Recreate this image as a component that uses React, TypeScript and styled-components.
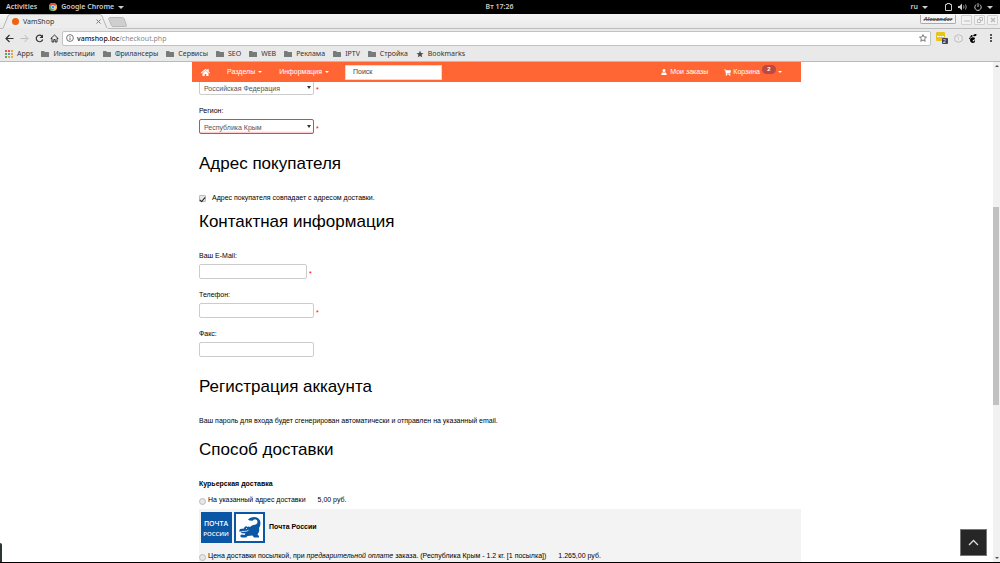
import React from "react";
import styled, { createGlobalStyle } from "styled-components";
import { FaHome, FaUser, FaShoppingCart } from "react-icons/fa";

const uiFont = '"Noto Sans", "Open Sans", sans-serif';
const pageFont = '"Liberation Sans", Arial, sans-serif';

const GlobalStyle = createGlobalStyle`
  * { box-sizing: border-box; }
  body { margin: 0; background: #fff; font-family: ${pageFont}; font-size: 7px; }
  button, input, select { font: inherit; margin: 0; }
  a { color: inherit; text-decoration: none; }
  svg { display: block; flex: none; }
`;

const Screen = styled.div`
  display: flex;
  flex-direction: column;
  height: 100vh;
  min-height: 300px;
  border-bottom: 1px solid #000;
`;

/* Desktop bar */
const DesktopBar = styled.header`
  display: grid;
  grid-template-columns: 1fr auto 1fr;
  align-items: center;
  flex: none;
  height: 14px;
  padding: 0 7px 0 6px;
  background: #000;
  color: #ccc;
  font: 600 7px/14px ${uiFont};
`;
const BarGroup = styled.div<{ $end?: boolean; $gap: number }>`
  display: flex;
  align-items: center;
  justify-content: ${(p) => (p.$end ? "flex-end" : "flex-start")};
  gap: ${(p) => p.$gap}px;
`;
const BarButton = styled.button<{ $gap?: number }>`
  display: flex;
  align-items: center;
  gap: ${(p) => p.$gap ?? 4}px;
  padding: 0;
  border: 0;
  background: none;
  color: inherit;
`;
const Caret = styled.span<{ $size?: number }>`
  border: ${(p) => p.$size ?? 2}px solid transparent;
  border-top-color: currentColor;
  border-bottom: 0;
`;

/* Browser window */
const TabStrip = styled.div`
  display: flex;
  align-items: flex-start;
  flex: none;
  height: 15px;
  padding: 0 2px 0 3px;
  border-bottom: 1px solid #bdbdbd;
  background: linear-gradient(#f6f6f6, #e9e9e9);
  font: 7px/14px ${uiFont};
  color: #333;
`;
const Tab = styled.div`
  display: grid;
  width: 105px;
  height: 15px;
  > * { grid-area: 1 / 1; }
`;
const TabContent = styled.div`
  display: flex;
  align-items: center;
  gap: 4px;
  padding: 0 7px 0 9px;
`;
const TabTitle = styled.span`
  flex: 1;
`;
const CloseButton = styled.button`
  padding: 0;
  border: 0;
  background: none;
`;
const NewTab = styled.button`
  padding: 3px 0 0;
  border: 0;
  background: none;
`;
const WindowControls = styled.div`
  display: flex;
  gap: 2px;
  margin-left: auto;
  padding-top: 1px;
`;
const UserButton = styled.button`
  width: 36px;
  height: 9px;
  margin-right: 3px;
  padding: 0;
  border: 1px solid #aaa;
  border-top: 0;
  border-radius: 0 0 2px 2px;
  background: #f4f4f4;
  color: #555;
  font: italic bold 6px/7px ${uiFont};
  text-decoration: line-through;
`;
const WindowButton = styled.button`
  display: grid;
  place-items: center;
  width: 11px;
  height: 10px;
  padding: 0;
  border: 1px solid #d0d0d0;
  border-radius: 1px;
  background: #f2f2f2;
`;
const Toolbar = styled.div`
  display: flex;
  align-items: center;
  flex: none;
  gap: 6px;
  height: 18px;
  padding: 0 5px;
  background: #e9e9e9;
`;
const IconButton = styled.button`
  padding: 0;
  border: 0;
  background: none;
`;
const Address = styled.div`
  display: flex;
  align-items: center;
  flex: 1;
  gap: 3px;
  height: 15px;
  margin: 0 -1px 0 -3px;
  padding: 0 3px;
  border: 1px solid #c2c2c2;
  border-radius: 2px;
  background: #fff;
  font: 7px/13px ${uiFont};
  color: #888;
`;
const Url = styled.span`
  flex: 1;
  b { font-weight: 500; color: #111; }
`;
const ToolbarIcons = styled.div`
  display: flex;
  align-items: center;
  gap: 6px;
  padding-right: 2px;
`;
const Bookmarks = styled.nav`
  display: flex;
  align-items: center;
  flex: none;
  gap: 8px;
  height: 15px;
  padding: 0 5px 1px;
  border-bottom: 1px solid #bdb9ba;
  background: #e9e9e9;
  font: 7px/14px ${uiFont};
  color: #333;
`;
const Bookmark = styled.a`
  display: flex;
  align-items: center;
  gap: 4px;
`;

/* Shop page */
const Viewport = styled.div`
  position: relative;
  display: flex;
  flex: 1;
  min-height: 0;
`;
const Page = styled.main`
  flex: 1;
  min-width: 0;
  overflow: hidden;
  color: #000;
  line-height: 15px;
`;
const Scrollbar = styled.div`
  display: flex;
  flex-direction: column;
  align-items: center;
  flex: none;
  width: 7px;
  padding: 3px 0;
  background: #f1f1f1;
`;
const Track = styled.div`
  flex: 1;
  width: 100%;
  display: grid;
  grid-template-rows: 140fr 198fr 152fr;
`;
const Thumb = styled.div`
  grid-row: 2;
  margin: 0 1px 0 0;
  background: #c1c1c1;
`;
const ScrollArrow = styled.span<{ $down?: boolean }>`
  border: 2px solid transparent;
  ${(p) => (p.$down ? "border-top-color: #505050; border-bottom: 0;" : "border-bottom-color: #505050; border-top: 0;")}
`;
const Container = styled.div`
  max-width: 609px;
  margin: 0 auto;
`;
const NavLayer = styled.div`
  position: absolute;
  top: 0;
  left: 0;
  right: 7px;
  z-index: 1;
`;
const Navbar = styled.nav`
  display: flex;
  align-items: center;
  height: 20px;
  padding: 0 19px 0 9px;
  background: #ff6633;
  color: #fff;
  line-height: 20px;
`;
const NavLink = styled.a<{ $space: number; $gap?: number }>`
  display: flex;
  align-items: center;
  gap: ${(p) => p.$gap ?? 3}px;
  margin-right: ${(p) => p.$space}px;
`;
const Search = styled.input`
  width: 97px;
  height: 15px;
  margin-right: auto;
  padding: 0 7px;
  border: 1px solid #ddd;
  background: #fff;
  color: #333;
  &::placeholder { color: #444; opacity: 1; }
`;
const Badge = styled.span`
  align-self: flex-start;
  width: 14px;
  height: 9px;
  margin-top: 3px;
  border-radius: 5px;
  background: #b94a48;
  font: bold 6px/9px ${pageFont};
  text-align: center;
`;
const Form = styled.form`
  padding: 18px 0 0 7px;
`;
const Field = styled.div`
  padding-bottom: 8px;
`;
const Label = styled.label`
  display: block;
  margin-bottom: 1px;
`;
const ControlRow = styled.div`
  display: flex;
  align-items: center;
  gap: 2px;
  height: 15px;
`;
const inputBox = `
  height: 15px;
  border: 1px solid #ccc;
  border-radius: 2px;
  background: #fff;
  color: #555;
`;
const TextInput = styled.input<{ $short?: boolean }>`
  ${inputBox}
  width: ${(p) => (p.$short ? 108 : 115)}px;
  padding: 0 5px;
`;
const SelectWrap = styled.span`
  display: grid;
  align-items: center;
  width: 115px;
  > * { grid-area: 1 / 1; }
`;
const Select = styled.select<{ $invalid?: boolean }>`
  ${inputBox}
  appearance: none;
  width: 100%;
  padding: 0 4px 1px;
  border-color: ${(p) => (p.$invalid ? "#e2404c" : "#ccc")};
  background: ${(p) => (p.$invalid ? "linear-gradient(#fff 11px, #fbc4c6)" : "#fff")};
`;
const SelectArrow = styled(Caret)`
  justify-self: end;
  margin-right: 3px;
  border-top-width: 3px;
  border-top-color: #333;
  pointer-events: none;
`;
const Required = styled.span`
  color: #f00;
  line-height: 15px;
  padding-top: 4px;
`;
const Heading = styled.h2`
  margin: 11px 0 16px;
  font-size: 17px;
  font-weight: 400;
  line-height: 21px;
`;
const Text = styled.p<{ $bold?: boolean }>`
  margin: 0;
  font-weight: ${(p) => (p.$bold ? 700 : 400)};
`;
const CheckRow = styled.label`
  display: flex;
  gap: 6px;
  height: 10px;
`;
const Checkbox = styled.input`
  appearance: none;
  display: grid;
  place-items: center;
  width: 7px;
  height: 7px;
  margin-top: 5px;
  border: 1px solid #bbb;
  border-radius: 1px;
  background: #e8e8e8;
  &:checked::after {
    content: "";
    width: 2px;
    height: 5px;
    border: solid #222;
    border-width: 0 1px 1px 0;
    transform: rotate(40deg);
  }
`;
const Option = styled.label`
  display: flex;
  align-items: center;
  gap: 2px;
  height: 17px;
`;
const Radio = styled.input`
  appearance: none;
  width: 7px;
  height: 7px;
  margin-top: 3px;
  border: 1px solid #bbb;
  border-radius: 50%;
  background: #e6e6e6;
`;
const Price = styled.span`
  margin-left: 10px;
`;
const Shaded = styled.section`
  margin-top: 1px;
  background: #f3f3f3;
  padding-top: 3px;
`;
const Carrier = styled.h3`
  display: flex;
  align-items: center;
  gap: 2px;
  margin: 0 0 4px;
  padding-left: 2px;
  font-size: 7px;
`;
const CarrierName = styled.span`
  margin: 0 0 2px 2px;
`;
const ToTop = styled.button`
  position: absolute;
  right: 13px;
  bottom: 6px;
  display: grid;
  place-items: center;
  width: 27px;
  height: 27px;
  padding: 0;
  border: 1px solid #777;
  background: #262626;
`;
const StatusEdge = styled.div`
  position: absolute;
  left: 0;
  bottom: 0;
  width: 2px;
  height: 19px;
  border-top-right-radius: 2px;
  background: #2e3436;
`;

const Folder = () => (
  <svg width="8" height="8" viewBox="0 0 8 8"><path d="M0 1.500Q0 1 .5 1H3l1 1h3.500q.5 0 .5.5v4q0 .5-.5.5h-7Q0 7 0 6.500z" fill="#777b7b" /></svg>
);
const StarIcon = ({ filled }: { filled?: boolean }) => (
  <svg width="8" height="8" viewBox="0 0 16 16">
    <path d="M8 1.200l2 4.700 5 .4-3.800 3.300 1.200 5L8 12l-4.400 2.600 1.200-5L1 6.300l5-.4z" fill={filled ? "#505050" : "none"} stroke="#505050" strokeWidth={filled ? 0 : 1.5} />
  </svg>
);
const AppsIcon = () => (
  <svg width="8" height="8" viewBox="0 0 8 8">
    {["#e8554a", "#e8554a", "#e8a33c", "#5aa865", "#5b8de0", "#e8a33c", "#5aa865", "#e8a33c", "#e8b33c"].map((c, i) => (
      <rect key={i} x={(i % 3) * 3} y={Math.floor(i / 3) * 3} width="2" height="2" fill={c} />
    ))}
  </svg>
);
const ChromeLogo = () => (
  <svg width="8" height="8" viewBox="0 0 16 16">
    <circle cx="8" cy="8" r="8" fill="#f7ca3e" />
    <path d="M8 8L1.100 4A8 8 0 0 1 15 4z" fill="#dd4b3e" />
    <path d="M8 8L1.100 4A8 8 0 0 0 7.500 16L11 10z" fill="#4ba55c" />
    <circle cx="8" cy="8" r="3.900" fill="#fff" />
    <circle cx="8" cy="8" r="3" fill="#4a8af4" />
  </svg>
);
const logoFont = { fontFamily: '"Open Sans", sans-serif', fontWeight: 600, fill: "#fff" };
const PostLogo = () => (
  <svg width="31" height="31" viewBox="0 0 31 31">
    <rect width="31" height="31" fill="#0b56a5" />
    <text x="15" y="14" textAnchor="middle" fontSize="7" {...logoFont}>ПОЧТА</text>
    <text x="15" y="24" textAnchor="middle" fontSize="6" {...logoFont}>РОССИИ</text>
  </svg>
);
const CrocLogo = () => (
  <svg width="31" height="31" viewBox="0 0 31 31">
    <rect x="1" y="1" width="29" height="29" fill="#fff" stroke="#0b56a5" strokeWidth="2" />
    <path d="M5 19.500l1-2.500 4-.5.5-1.500q1.500-1.500 3 0 1-1 2.500 0 1.500-2 4.500-2.200 3-.3 3-3 0-2.500-2.500-2.600-1.500 0-2.500 1.500l-3-.2-1.500-1q2-2.500 6.500-2.500 5.500.5 6 6 0 3-1.500 5 1 3.500-1.500 6.500l1.500 1.500v1.500h-5l-1.500-2-5 .5-1.500 1.500H7.500l-1.500-1.500 1.500-1.500 3 .5 1-1.500-5-.5 2-1.500z" fill="#0b56a5" />
    <path d="M8 19.500l4.500-.3 2-1M12 16.500h1" stroke="#fff" strokeWidth=".8" fill="none" />
  </svg>
);

const folders = ["Инвестиции", "Фрилансеры", "Сервисы", "SEO", "WEB", "Реклама", "IPTV", "Стройка"];

function DesktopHeader() {
  return (
    <DesktopBar>
      <BarGroup $gap={12}>
        <BarButton>Activities</BarButton>
        <BarButton><ChromeLogo />Google Chrome<Caret $size={3} /></BarButton>
      </BarGroup>
      <span>Вт 17:26</span>
      <BarGroup $end $gap={7}>
        <BarButton>ru<Caret $size={3} /></BarButton>
        <svg width="32" height="8" viewBox="-10 0 32 8">
          <path d="M.5 1.500h1.500v-1h3v1h1.500v6h-6z" stroke="#ccc" fill="none" />
          <path d="M13 3h1.500l2.500-2.500v7L14.500 5H13z" fill="#ccc" />
          <path d="M18.500 2.500q1 1.500 0 3M20.500 1.500q1.500 2.500 0 5" stroke="#999" fill="none" />
        </svg>
        <BarButton aria-label="Power" $gap={5}>
          <svg width="8" height="8" viewBox="0 0 8 8"><path d="M2.300 1.500a3.200 3.200 0 1 0 3.400 0M4 .3V4" stroke="#ccc" fill="none" /></svg>
          <Caret $size={3} />
        </BarButton>
      </BarGroup>
    </DesktopBar>
  );
}

function BrowserChrome() {
  return (
    <>
      <TabStrip>
        <Tab>
          <svg width="105" height="15" viewBox="0 0 105 15"><path d="M0 14.500L5 2q.5-1.500 2-1.500h90q1.500 0 2 1.500l5 12.500" fill="#ededed" stroke="#b5b5b5" /><path d="M0 14.500h105" stroke="#e9e9e9" /></svg>
          <TabContent>
            <svg width="7" height="7" viewBox="0 0 8 8"><circle cx="4" cy="4" r="4" fill="#ee6210" /></svg>
            <TabTitle>VamShop</TabTitle>
            <CloseButton aria-label="Close tab"><svg width="5" height="5" viewBox="0 0 5 5"><path d="M.5.5l4 4m0-4l-4 4" stroke="#777" /></svg></CloseButton>
          </TabContent>
        </Tab>
        <NewTab aria-label="New tab">
          <svg width="19" height="10" viewBox="0 0 19 10"><path d="M1.500 .5h13q1 0 1.500 1l2.500 7q0 1-1 1H5q-1 0-1.500-1L.5 1.500z" fill="#cfcfcf" stroke="#b8b8b8" /></svg>
        </NewTab>
        <WindowControls>
          <UserButton>Alexander</UserButton>
          <WindowButton aria-label="Minimize"><svg width="6" height="6"><path d="M0 4h6" stroke="#bbb" /></svg></WindowButton>
          <WindowButton aria-label="Restore"><svg width="6" height="6"><path d="M.5 2.500h3v3h-3zM2.500 2V.5h3v3H4" stroke="#bbb" fill="none" /></svg></WindowButton>
          <WindowButton aria-label="Close"><svg width="6" height="6"><path d="M1 1l4 4m0-4l-4 4" stroke="#bbb" strokeWidth="1.500" /></svg></WindowButton>
        </WindowControls>
      </TabStrip>
      <Toolbar>
        <IconButton aria-label="Back"><svg width="9" height="9" viewBox="0 0 9 9"><path d="M8.500 4.500h-7M4.500 1L1 4.500 4.500 8" stroke="#333" strokeWidth="1.200" fill="none" /></svg></IconButton>
        <IconButton aria-label="Forward"><svg width="9" height="9" viewBox="0 0 9 9"><path d="M.5 4.500h7M4.500 1L8 4.500 4.500 8" stroke="#bbb" fill="none" /></svg></IconButton>
        <IconButton aria-label="Reload"><svg width="9" height="9" viewBox="0 0 9 9"><path d="M7 2.200A3.300 3.300 0 1 0 7.700 5.500" stroke="#333" strokeWidth="1.200" fill="none" /><path d="M8 .5v3.500H4.500z" fill="#333" /></svg></IconButton>
        <IconButton aria-label="Home"><svg width="9" height="9" viewBox="0 0 9 9"><path d="M2 4.500V8h1.800V5.500h1.400V8H7V4.500h1.200L4.500 1 .8 4.500z" stroke="#333" fill="none" /></svg></IconButton>
        <Address>
          <svg width="8" height="8" viewBox="0 0 8 8"><circle cx="4" cy="4" r="3.400" stroke="#666" strokeWidth=".9" fill="none" /><path d="M4 3.500V6M4 2v.9" stroke="#666" strokeWidth=".9" /></svg>
          <Url><b>vamshop.loc</b>/checkout.php</Url>
          <StarIcon />
        </Address>
        <ToolbarIcons>
          <svg width="12" height="12" viewBox="0 0 12 12"><rect width="9" height="9" rx="1" fill="#e8c51c" /><path d="M1 4.500h7" stroke="#fff" strokeDasharray="2 .5" /><rect x="6" y="6" width="6" height="6" rx="1" fill="#445" /><text x="7" y="11" fontSize="5" fontFamily="Liberation Sans, sans-serif" fill="#fff">2</text></svg>
          <svg width="9" height="9" viewBox="0 0 9 9"><path d="M4.500.6l3.600 1.700v4.400L4.500 8.400.9 6.700V2.300z" fill="#eee" stroke="#bbb" /><path d="M2.500 3h2v3.500" stroke="#ccc" fill="none" /></svg>
          <svg width="8" height="9" viewBox="0 0 16 18"><path d="M8 4Q9 0 13 0q3 0 2 2.500Q13.500 5 8 4z" /><path d="M12 9Q11 6 7 6.500 1.500 8 2 12.500 3 18 8 18q4-.5 4-3.500 0-2.500-1.500-2 0 2.500-2 2.500Q6 14.500 8 12q4-1 4-3z" /><circle cx="5.500" cy="4" r="1.800" /><circle cx="3" cy="6" r="1.500" /><circle cx="1.300" cy="9" r="1.300" /></svg>
          <svg width="10" height="8" viewBox="-6 0 10 8"><path d="M1 0h2v2H1zM1 3h2v2H1zM1 6h2v2H1z" fill="#555" /></svg>
        </ToolbarIcons>
      </Toolbar>
      <Bookmarks>
        <Bookmark href="#"><AppsIcon />Apps</Bookmark>
        {folders.map((name) => <Bookmark href="#" key={name}><Folder />{name}</Bookmark>)}
        <Bookmark href="#"><StarIcon filled />Bookmarks</Bookmark>
      </Bookmarks>
    </>
  );
}

function FormField({ id, label, required, short }: { id: string; label: string; required?: boolean; short?: boolean }) {
  return (
    <Field>
      <Label htmlFor={id}>{label}</Label>
      <ControlRow><TextInput id={id} $short={short} />{required && <Required>*</Required>}</ControlRow>
    </Field>
  );
}

function SelectControl({ id, value, invalid, label }: { id: string; value: string; invalid?: boolean; label?: string }) {
  return (
    <ControlRow>
      <SelectWrap>
        <Select id={id} $invalid={invalid} aria-label={label}><option>{value}</option></Select>
        <SelectArrow />
      </SelectWrap>
      <Required>*</Required>
    </ControlRow>
  );
}

export default function App() {
  return (
    <Screen>
      <GlobalStyle />
      <DesktopHeader />
      <BrowserChrome />
      <Viewport>
        <NavLayer>
          <Container>
            <Navbar>
              <NavLink href="#" $space={17} aria-label="Главная"><FaHome size={9} /></NavLink>
              <NavLink href="#" $space={17}>Разделы <Caret /></NavLink>
              <NavLink href="#" $space={16}>Информация <Caret /></NavLink>
              <Search placeholder="Поиск" aria-label="Поиск" />
              <NavLink href="#" $space={16}><FaUser size={6} />Мои заказы</NavLink>
              <NavLink href="#" $space={0} $gap={2}><FaShoppingCart size={7} />Корзина<Badge>2</Badge><Caret /></NavLink>
            </Navbar>
          </Container>
        </NavLayer>
        <Page>
          <Container>
            <Form>
              <Field><SelectControl id="country" value="Российская Федерация" label="Страна" /></Field>
              <Field>
                <Label htmlFor="region">Регион:</Label>
                <SelectControl id="region" value="Республика Крым" invalid />
              </Field>
              <Heading>Адрес покупателя</Heading>
              <CheckRow><Checkbox type="checkbox" defaultChecked />Адрес покупателя совпадает с адресом доставки.</CheckRow>
              <Heading>Контактная информация</Heading>
              <FormField id="email" label="Ваш E-Mail:" required short />
              <FormField id="phone" label="Телефон:" required />
              <FormField id="fax" label="Факс:" />
              <Heading>Регистрация аккаунта</Heading>
              <Text>Ваш пароль для входа будет сгенерирован автоматически и отправлен на указанный email.</Text>
              <Heading>Способ доставки</Heading>
              <Text $bold>Курьерская доставка</Text>
              <Option><Radio type="radio" name="shipping" />На указанный адрес доставки<Price>5,00 руб.</Price></Option>
              <Shaded>
                <Carrier><PostLogo /><CrocLogo /><CarrierName>Почта России</CarrierName></Carrier>
                <Option>
                  <Radio type="radio" name="shipping" />
                  <span>Цена доставки посылкой, при <em>предварительной оплате</em> заказа. (Республика Крым - 1.2 кг. [1 посылка])</span>
                  <Price>1.265,00 руб.</Price>
                </Option>
              </Shaded>
            </Form>
          </Container>
        </Page>
        <Scrollbar><ScrollArrow /><Track><Thumb /></Track><ScrollArrow $down /></Scrollbar>
        <ToTop aria-label="Наверх"><svg width="11" height="7" viewBox="0 0 11 7"><path d="M1 6l4.500-4.500L10 6" stroke="#ddd" strokeWidth="1.300" fill="none" /></svg></ToTop>
        <StatusEdge />
      </Viewport>
    </Screen>
  );
}
